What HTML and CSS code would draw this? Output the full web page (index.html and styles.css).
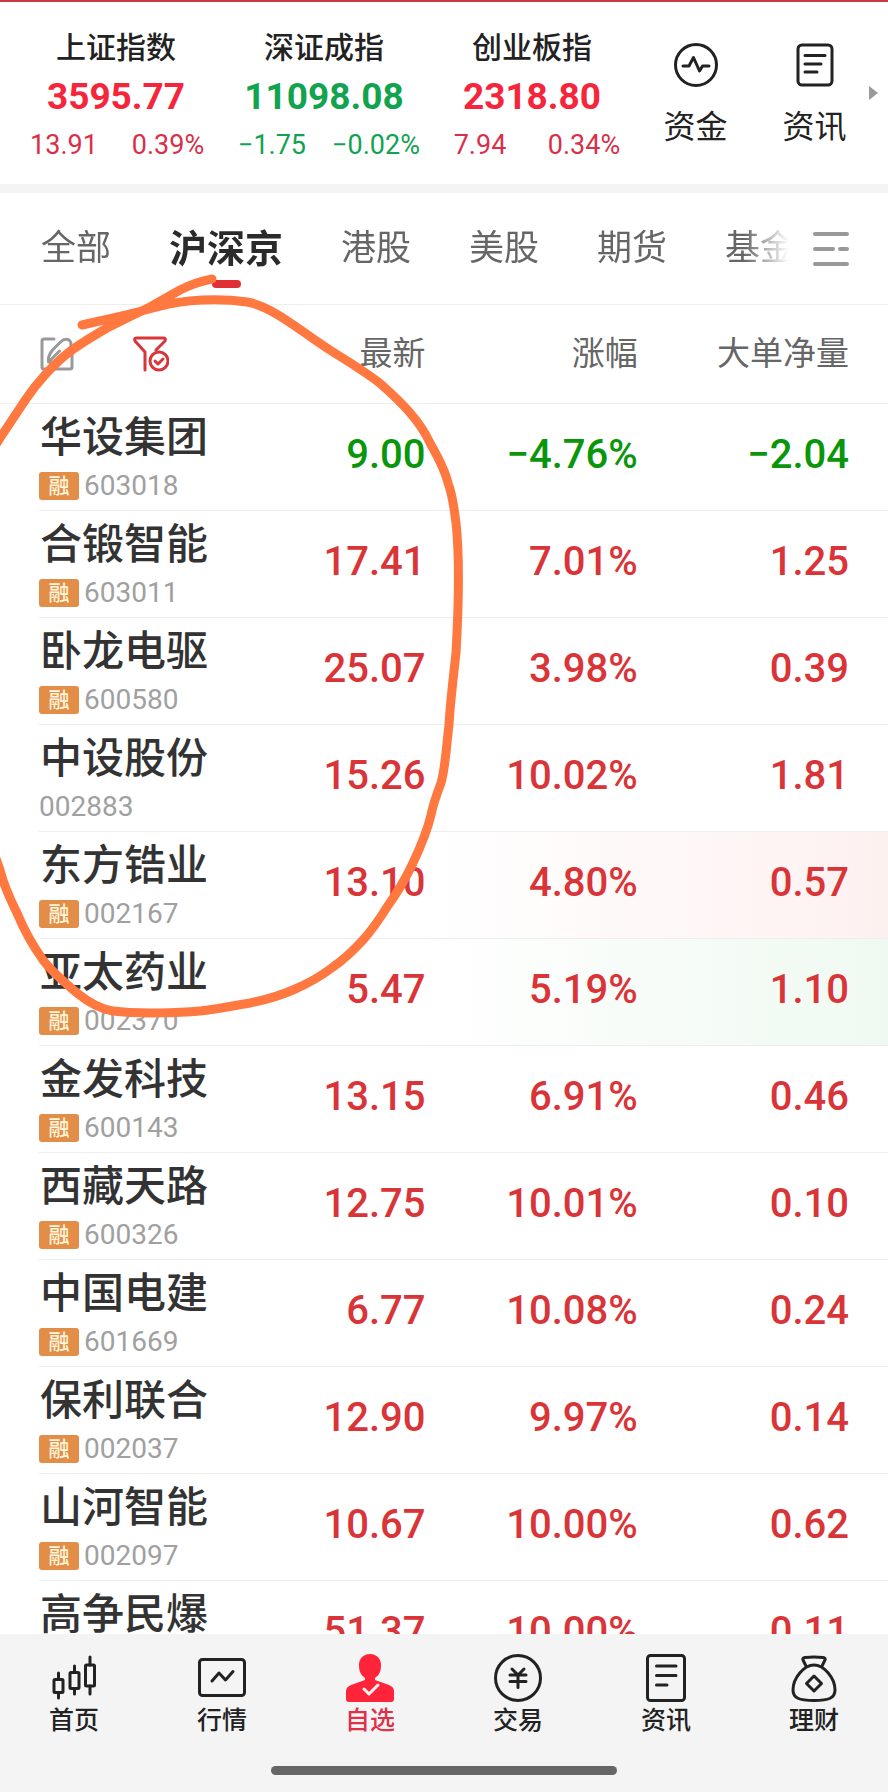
FILE: index.html
```html
<!DOCTYPE html>
<html lang="zh-CN">
<head>
    <meta charset="UTF-8">
    <meta name="viewport" content="width=device-width, initial-scale=1.0">
    <title>自选</title>
    <link rel="stylesheet" href="styles.css">
</head>
<body>
    <!-- Market indices -->
    <header class="indices">
        <a href="#" class="index up">
            <span class="index-name">上证指数</span>
            <span class="index-value">3595.77</span>
            <span class="index-change"><span>13.91</span><span>0.39%</span></span>
        </a>
        <a href="#" class="index down">
            <span class="index-name">深证成指</span>
            <span class="index-value">11098.08</span>
            <span class="index-change"><span>−1.75</span><span>−0.02%</span></span>
        </a>
        <a href="#" class="index up">
            <span class="index-name">创业板指</span>
            <span class="index-value">2318.80</span>
            <span class="index-change"><span>7.94</span><span>0.34%</span></span>
        </a>
        <a href="#" class="shortcut">
            <svg class="shortcut-icon" viewBox="0 0 44 44">
                <circle cx="22" cy="22" r="20.5"/>
                <path d="M9 23h6l4.500-8.500 6 13.500 3-5h6.500"/>
            </svg>
            <span>资金</span>
        </a>
        <a href="#" class="shortcut">
            <svg class="shortcut-icon" viewBox="0 0 44 44">
                <rect x="5" y="2" width="34" height="40" rx="4"/>
                <path d="M12 12.500h20M12 21h16M12 29h12"/>
            </svg>
            <span>资讯</span>
        </a>
        <span class="more-arrow"></span>
    </header>

    <!-- Market tabs -->
    <nav class="market-tabs">
        <div class="tab-scroll">
            <a href="#" class="tab">全部</a>
            <a href="#" class="tab active">沪深京</a>
            <a href="#" class="tab">港股</a>
            <a href="#" class="tab">美股</a>
            <a href="#" class="tab">期货</a>
            <a href="#" class="tab">基金</a>
        </div>
        <button class="menu-btn" aria-label="分组管理">
            <svg viewBox="0 0 36 36">
                <path d="M2 3h32M2 18h18M27 18h7M2 33h32"/>
            </svg>
        </button>
    </nav>

    <!-- Watchlist -->
    <main class="watchlist">
        <table class="stocks">
            <thead>
                <tr>
                    <th class="tools">
                        <div class="tool-group">
                            <button class="tool-btn" aria-label="编辑">
                                <svg viewBox="0 0 36 36" class="edit-icon">
                                    <path d="M15 3H5q-2 0-2 2v26q0 2 2 2h26q2 0 2-2V18"/>
                                    <path d="M9.500 26c-1-4 1-8 4-12l8-8c4-4 8-3 9.500-1 2 3 1 6-1 9l-8 8c-4 4-8 5-12.500 4zM9.500 26l11-11"/>
                                </svg>
                            </button>
                            <button class="tool-btn" aria-label="筛选">
                                <svg viewBox="0 0 36 36" class="filter-icon">
                                    <path d="M12 34V16L2 5q-1-3 1-3h28q2 0 1 3l-9 9"/>
                                    <circle cx="26" cy="25" r="9"/>
                                    <path d="M22 25l3 3 5-5"/>
                                </svg>
                            </button>
                        </div>
                    </th>
                    <th>最新</th>
                    <th>涨幅</th>
                    <th>大单净量</th>
                </tr>
            </thead>
            <tbody>
                <tr class="down">
                    <td><div class="name">华设集团</div><div class="code"><span class="badge">融</span>603018</div></td>
                    <td>9.00</td>
                    <td>−4.76%</td>
                    <td>−2.04</td>
                </tr>
                <tr>
                    <td><div class="name">合锻智能</div><div class="code"><span class="badge">融</span>603011</div></td>
                    <td>17.41</td>
                    <td>7.01%</td>
                    <td>1.25</td>
                </tr>
                <tr>
                    <td><div class="name">卧龙电驱</div><div class="code"><span class="badge">融</span>600580</div></td>
                    <td>25.07</td>
                    <td>3.98%</td>
                    <td>0.39</td>
                </tr>
                <tr>
                    <td><div class="name">中设股份</div><div class="code">002883</div></td>
                    <td>15.26</td>
                    <td>10.02%</td>
                    <td>1.81</td>
                </tr>
                <tr class="flash-up">
                    <td><div class="name">东方锆业</div><div class="code"><span class="badge">融</span>002167</div></td>
                    <td>13.10</td>
                    <td>4.80%</td>
                    <td>0.57</td>
                </tr>
                <tr class="flash-down">
                    <td><div class="name">亚太药业</div><div class="code"><span class="badge">融</span>002370</div></td>
                    <td>5.47</td>
                    <td>5.19%</td>
                    <td>1.10</td>
                </tr>
                <tr>
                    <td><div class="name">金发科技</div><div class="code"><span class="badge">融</span>600143</div></td>
                    <td>13.15</td>
                    <td>6.91%</td>
                    <td>0.46</td>
                </tr>
                <tr>
                    <td><div class="name">西藏天路</div><div class="code"><span class="badge">融</span>600326</div></td>
                    <td>12.75</td>
                    <td>10.01%</td>
                    <td>0.10</td>
                </tr>
                <tr>
                    <td><div class="name">中国电建</div><div class="code"><span class="badge">融</span>601669</div></td>
                    <td>6.77</td>
                    <td>10.08%</td>
                    <td>0.24</td>
                </tr>
                <tr>
                    <td><div class="name">保利联合</div><div class="code"><span class="badge">融</span>002037</div></td>
                    <td>12.90</td>
                    <td>9.97%</td>
                    <td>0.14</td>
                </tr>
                <tr>
                    <td><div class="name">山河智能</div><div class="code"><span class="badge">融</span>002097</div></td>
                    <td>10.67</td>
                    <td>10.00%</td>
                    <td>0.62</td>
                </tr>
                <tr>
                    <td><div class="name">高争民爆</div></td>
                    <td>51.37</td>
                    <td>10.00%</td>
                    <td>0.11</td>
                </tr>
            </tbody>
        </table>
    </main>

    <!-- Bottom navigation -->
    <footer class="bottom-bar">
        <nav class="bottom-nav">
            <a href="#" class="nav-item">
                <svg viewBox="0 0 48 48">
                    <rect x="4" y="25.500" width="9" height="13" rx="1"/>
                    <rect x="20" y="18.500" width="9" height="16" rx="1"/>
                    <rect x="35.500" y="11" width="9" height="21" rx="1"/>
                    <path d="M8.500 19v6M8.500 39v5M24.500 12v6M24.500 35v5M40 3v8M40 32v8"/>
                </svg>
                <span>首页</span>
            </a>
            <a href="#" class="nav-item">
                <svg viewBox="0 0 48 48">
                    <rect x="1.500" y="5.500" width="45" height="36" rx="3"/>
                    <path d="M14 27l7-8 6.500 7 7.500-8.500"/>
                </svg>
                <span>行情</span>
            </a>
            <a href="#" class="nav-item active">
                <svg viewBox="0 0 48 48">
                    <path class="solid" d="M24 0c7 0 11 5 11 11 0 7-2 10-6 13v2l14 5q5 2 5 6v8q0 3-3 3H3q-3 0-3-3v-8q0-4 5-6l14-5v-2c-4-3-6-6-6-13C13 5 17 0 24 0z"/>
                    <path class="tick" d="M18 35l5 5 9-9"/>
                </svg>
                <span>自选</span>
            </a>
            <a href="#" class="nav-item">
                <svg viewBox="0 0 48 48">
                    <circle cx="24" cy="24" r="22.500"/>
                    <path d="M18 15l6 6 6-6M24 21v12.500M16 21h16M16 27.500h16"/>
                </svg>
                <span>交易</span>
            </a>
            <a href="#" class="nav-item">
                <svg viewBox="0 0 48 48">
                    <rect x="5.500" y="1.500" width="37" height="45" rx="3"/>
                    <path d="M14.500 12h19.500M14.500 21.500h19.500M14.500 31h10.500"/>
                </svg>
                <span>资讯</span>
            </a>
            <a href="#" class="nav-item">
                <svg viewBox="0 0 48 48">
                    <path d="M16 12l-3-6q-1-2 2-2.500 9-1 18 0 3 .5 2 2.500l-3 6"/>
                    <path d="M24 11c10 0 21 13 21 25 0 8-6 10.500-21 10.500S3 44 3 36c0-12 11-25 21-25z"/>
                    <path d="M24 22l7.500 7.500-7.500 7.500-7.500-7.500z"/>
                </svg>
                <span>理财</span>
            </a>
        </nav>
        <div class="home-bar"></div>
    </footer>

    <!-- Pen mark over the list -->
    <svg class="pen-mark" viewBox="0 0 888 1792" aria-hidden="true">
        <path d="M82 325C108 319 135 313 157 307C185 299 220 298 247 302C275 307 305 335 333 352C352 364 372 376 383 386C402 403 420 421 430 443C438 457 445 470 448 483C453 496 454 508 456 523C459 550 459 600 456 653C453 680 450 705 449 725C446 750 445 770 441 783C436 796 433 805 431 815C427 832 420 848 413 863C405 880 397 893 387 907C379 920 371 931 363 940C353 951 343 960 333 967C320 977 307 984 293 990C279 996 265 1000 250 1003C230 1006 220 1009 200 1011C180 1013 135 1014 113 1011C100 1009 88 1002 77 993C65 983 53 973 43 960C33 946 24 930 17 913C10 899 4 886 0 870L-14 830M-10 454L0 438Q12 420 26 399C36 384 54 363 72 350C83 342 95 335 107 328Q129 317 150 307Q166 298 180 290Q196 282 212 279"/>
    </svg>
</body>
</html>
```

FILE: styles.css
```css
* {
    box-sizing: border-box;
    margin: 0;
    padding: 0;
}

body {
    position: relative;
    display: flex;
    flex-direction: column;
    height: 100vh;
    overflow: hidden;
    background: #fff;
    color: #222;
    border-top: 2px solid #c93a45;
    font-family: Roboto, "Noto Sans CJK SC", sans-serif;
}

a {
    color: inherit;
    text-decoration: none;
}

button {
    background: none;
    border: none;
    cursor: pointer;
}

svg {
    display: block;
    fill: none;
    stroke: currentColor;
    stroke-width: 2;
    stroke-linecap: round;
    stroke-linejoin: round;
}

/* Market indices */
.indices {
    position: relative;
    display: grid;
    grid-template-columns: 208fr 208fr 208fr 119fr 119fr;
    padding: 26px 14px 19px 12px;
    border-bottom: 9px solid #f4f4f4;
}

.index {
    display: flex;
    flex-direction: column;
    align-items: center;
}

.index-name {
    font-size: 30px;
    font-weight: 500;
    line-height: 40px;
}

.index-value {
    font-size: 37px;
    font-weight: 700;
    line-height: 58px;
}

.index-change {
    display: flex;
    align-self: stretch;
    font-size: 27px;
    line-height: 39px;
}

.index-change span {
    flex: 1;
    text-align: center;
}

.index.up .index-value {
    color: #f5253c;
}

.index.up .index-change {
    color: #d9304a;
}

.index.down .index-value,
.index.down .index-change {
    color: #12a350;
}

.shortcut {
    display: flex;
    flex-direction: column;
    align-items: center;
    gap: 18px;
    padding-top: 15px;
    font-size: 32px;
    line-height: 44px;
}

.shortcut-icon {
    width: 44px;
    height: 44px;
    stroke-width: 3;
}

.more-arrow {
    position: absolute;
    top: 84px;
    right: 10px;
    border-left: 9px solid #999;
    border-top: 7px solid transparent;
    border-bottom: 7px solid transparent;
}

/* Market tabs */
.market-tabs {
    display: flex;
    align-items: center;
    justify-content: space-between;
    height: 112px;
    padding: 0 39px 0 41px;
    border-bottom: 1px solid #eee;
}

.tab-scroll {
    display: flex;
    align-items: center;
    gap: 58px;
    flex: 1;
    height: 100%;
    margin-right: 24px;
    overflow: hidden;
    -webkit-mask-image: linear-gradient(to right, #000 calc(100% - 45px), transparent);
    mask-image: linear-gradient(to right, #000 calc(100% - 45px), transparent);
}

.tab {
    position: relative;
    flex-shrink: 0;
    font-size: 35px;
    line-height: 56px;
    color: #666;
}

.tab.active {
    font-size: 38px;
    font-weight: 700;
    color: #2b2b2b;
}

.tab.active::after {
    content: "";
    position: absolute;
    left: 50%;
    bottom: -11px;
    width: 29px;
    height: 8px;
    margin-left: -14px;
    border-radius: 4px;
    background: #e03036;
}

.menu-btn {
    width: 36px;
    height: 36px;
    color: #999;
}

.menu-btn svg {
    stroke-width: 4;
}

/* Watchlist */
.watchlist {
    flex: 1;
    min-height: 0;
    overflow: hidden;
    padding-left: 39px;
}

.stocks {
    width: 100%;
    table-layout: fixed;
    border-collapse: separate;
    border-spacing: 0;
}

.stocks th {
    height: 99px;
    padding-right: 4px;
    border-bottom: 1px solid #eee;
    font-size: 33px;
    font-weight: 400;
    line-height: 44px;
    text-align: right;
    color: #666;
}

.stocks th:nth-child(1) {
    width: 25%;
}

.stocks th:nth-child(2) {
    width: 21%;
}

.stocks th:nth-child(3) {
    width: 25%;
}

.stocks th:nth-child(4) {
    width: 29%;
}

.stocks th.tools {
    position: relative;
    text-align: left;
}

/* carries the header line to the screen edge */
.stocks th.tools::before {
    content: "";
    position: absolute;
    left: -39px;
    bottom: -1px;
    width: 39px;
    height: 1px;
    background: #eee;
}

.tool-group {
    display: flex;
    gap: 58px;
}

.tool-btn {
    width: 36px;
    height: 36px;
}

.tool-btn svg {
    stroke-width: 3;
}

.edit-icon {
    color: #999;
}

.filter-icon {
    color: #d9363a;
}

.stocks td {
    height: 107px;
    padding: 28px 4px 0 0;
    border-bottom: 1px solid #eee;
    vertical-align: top;
    text-align: right;
    font-size: 40px;
    font-weight: 500;
    line-height: 46px;
    color: #d93438;
}

.stocks th:last-child,
.stocks td:last-child {
    padding-right: 39px;
}

.stocks .down td {
    color: #0a960a;
}

.stocks td:first-child {
    padding-top: 12px;
    text-align: left;
}

.flash-up {
    background: linear-gradient(to right, #fff 45%, #fdf1f0);
}

.flash-down {
    background: linear-gradient(to right, #fff 45%, #eff9f1);
}

.name {
    padding-left: 1px;
    font-size: 42px;
    font-weight: 500;
    line-height: 44px;
    color: #333;
}

.code {
    display: flex;
    align-items: center;
    gap: 5px;
    margin-top: 12px;
    font-size: 28px;
    font-weight: 400;
    line-height: 28px;
    color: #a0a0a0;
}

.badge {
    width: 40px;
    height: 28px;
    border-radius: 3px;
    background: #e28e48;
    color: #fff6dc;
    font-size: 21px;
    font-weight: 500;
    line-height: 28px;
    text-align: center;
}

/* Bottom navigation */
.bottom-bar {
    padding: 20px 0 17px;
    background: #f4f4f4;
}

.bottom-nav {
    display: flex;
}

.nav-item {
    display: flex;
    flex: 1;
    flex-direction: column;
    align-items: center;
    gap: 3px;
    font-size: 25px;
    font-weight: 500;
    line-height: 32px;
}

.nav-item svg {
    width: 48px;
    height: 48px;
    stroke-width: 3;
}

.nav-item.active {
    color: #e0304a;
}

.nav-item .solid {
    fill: #ff2439;
    stroke: none;
}

.nav-item .tick {
    stroke: #f4f4f4;
}

.home-bar {
    width: 39%;
    height: 9px;
    margin: 29px auto 0;
    border-radius: 5px;
    background: #666;
}

.pen-mark {
    position: absolute;
    top: -2px;
    left: 0;
    width: 100%;
    color: #ff7840;
    stroke-width: 9;
    pointer-events: none;
}
```
